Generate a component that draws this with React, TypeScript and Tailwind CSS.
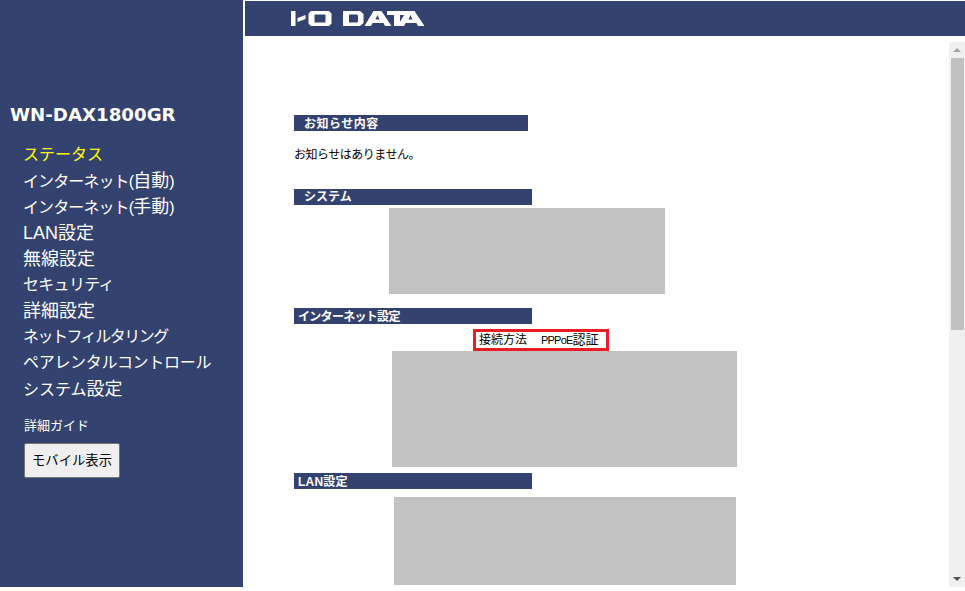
import type { ReactNode } from "react";

function Kanji({ children }: { children: ReactNode }) {
  return <span className="text-[18px] tracking-normal">{children}</span>;
}

const menu: { id: string; label: ReactNode; spacing: string }[] = [
  { id: "status", label: "ステータス", spacing: "" },
  { id: "auto", label: <>インターネット(<Kanji>自動</Kanji>)</>, spacing: "tracking-[-0.9px]" },
  { id: "manual", label: <>インターネット(<Kanji>手動</Kanji>)</>, spacing: "tracking-[-0.9px]" },
  { id: "lan", label: <Kanji>LAN設定</Kanji>, spacing: "" },
  { id: "wireless", label: <Kanji>無線設定</Kanji>, spacing: "" },
  { id: "security", label: "セキュリティ", spacing: "tracking-[-0.7px]" },
  { id: "detail", label: <Kanji>詳細設定</Kanji>, spacing: "" },
  { id: "filter", label: "ネットフィルタリング", spacing: "tracking-[-1.500px]" },
  { id: "parental", label: "ペアレンタルコントロール", spacing: "tracking-[-0.3px]" },
  { id: "system", label: <>システム<Kanji>設定</Kanji></>, spacing: "" },
];

function Logo() {
  return (
    <svg width="133" height="15" viewBox="0 0 133 15" fill="#fff">
      <rect x="0" y="0" width="4.500" height="15" />
      <path d="M6.500 7l8-3v4l-8 3z" />
      <path fillRule="evenodd" d="M20 0h18l2.500 2.500v10L38 15H20l-2.500-2.500v-10zM23.500 3.500v8h11v-8z" />
      <path fillRule="evenodd" d="M52 0h17l3.500 3v9L69 15H52zM58 3.500v8h8l1-1v-6l-1-1z" />
      <path fillRule="evenodd" d="M82.500 0h8l10 15h-6.500l-1.500-3h-11L80 15h-6.500zM86.500 4L84.500 8.500h4z" />
      <path d="M96 0h20v4h-7v11h-6V4h-7z" />
      <path fillRule="evenodd" d="M115.500 0h8l10 15H127l-1.500-3h-11L113 15h-6.500zM119.500 4l-2 4.500h4z" />
    </svg>
  );
}

function SectionTitle({ title, className }: { title: string; className: string }) {
  return <h2 className={`h-4 bg-[#344270] text-[12px] font-bold text-white ${className}`}>{title}</h2>;
}

export default function App() {
  return (
    <div className="flex h-[587px] overflow-hidden bg-white font-['Liberation_Sans','Noto_Sans_CJK_JP',sans-serif] text-black">
      <aside className="w-[243px] shrink-0 bg-[#344270] pl-[10px] pt-[103px] text-white">
        <h1 className="font-['DejaVu_Sans',sans-serif] text-[18.200px] leading-[24px] font-bold">WN-DAX1800GR</h1>
        <ul className="mt-[15px] ml-[13px] text-[16px] leading-[26px]">
          {menu.map((item, i) => (
            <li key={item.id} className={`h-[26px] whitespace-nowrap ${item.spacing} ${i === 0 ? "text-[#ffff00]" : "text-white"}`}>
              {item.label}
            </li>
          ))}
        </ul>
        <p className="mt-[14px] ml-[14px] text-[13px] leading-5">詳細ガイド</p>
        <button className="mt-[7px] ml-[14px] h-[35px] w-[96px] rounded-[2px] border border-[#767676] bg-[#efefef] text-[13.330px] text-black">
          モバイル表示
        </button>
      </aside>

      <div className="ml-[2px] flex min-w-0 flex-1 flex-col pt-px">
        <header className="flex h-[35px] shrink-0 items-center bg-[#344270] pl-[46px]">
          <Logo />
        </header>

        <div className="flex min-h-0 flex-1 pt-[6px]">
          <main className="min-w-0 flex-1 overflow-hidden pl-[49px] pt-[73px]">
            <SectionTitle title="お知らせ内容" className="w-[234px] pl-[10px] leading-[18px] tracking-[0.5px]" />
            <p className="mt-[14px] text-[12px] leading-[20px] tracking-[-0.5px]">お知らせはありません。</p>

            <SectionTitle title="システム" className="mt-[24px] w-[238px] pl-[10px] leading-4" />
            <div className="mt-[3px] ml-[95px] h-[86px] w-[276px] bg-[#c2c2c2]" />

            <SectionTitle title="インターネット設定" className="mt-[14px] w-[238px] pl-[4px] leading-[18px] tracking-[-0.7px]" />
            <div className="mt-[5px] ml-[179px] flex h-[22px] w-[136px] items-center border-[3px] border-[#ed1c24] pl-[3px] text-[12px] whitespace-nowrap">
              接続方法
              <span className="ml-[14px] text-[13px]">
                <span className="text-[11px] tracking-[-0.8px]">PPPoE</span>認証
              </span>
            </div>
            <div className="ml-[98px] h-[116px] w-[345px] bg-[#c2c2c2]" />

            <SectionTitle title="LAN設定" className="mt-[6px] w-[238px] pl-[4px] leading-[18px] tracking-[0.2px]" />
            <div className="mt-[8px] ml-[100px] h-[88px] w-[342px] bg-[#c2c2c2]" />
          </main>

          <div className="flex w-[16px] shrink-0 flex-col items-center bg-[#f0f0f0]">
            <div className="flex h-4 w-full items-center justify-center">
              <div className="h-0 w-0 border-x-[4px] border-b-[4px] border-x-transparent border-b-[#a3a3a3]" />
            </div>
            <div className="ml-px h-[272px] w-[13px] bg-[#c1c1c1]" />
            <div className="flex-1" />
            <div className="flex h-4 w-full items-center justify-center">
              <div className="h-0 w-0 border-x-[4px] border-t-[4px] border-x-transparent border-t-[#505050]" />
            </div>
          </div>
        </div>
      </div>
    </div>
  );
}
